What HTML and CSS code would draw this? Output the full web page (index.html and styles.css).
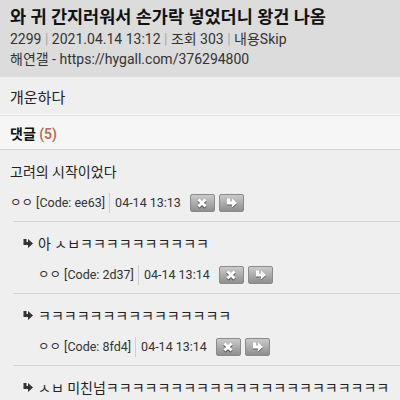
FILE: index.html
```html
<!DOCTYPE html>
<html lang="ko">
<head>
  <meta charset="UTF-8" />
  <meta name="viewport" content="width=device-width, initial-scale=1.0"/>
  <title>와 귀 간지러워서 손가락 넣었더니 왕건 나옴</title>
  <link rel="stylesheet" href="styles.css">
</head>
<body>

  <header class="post-head">
    <h1>와 귀 간지러워서 손가락 넣었더니 왕건 나옴</h1>
    <p class="meta">2299 <span class="bar">|</span> 2021.04.14 13:12 <span class="bar">|</span> 조회 303 <span class="bar">|</span> 내용Skip</p>
    <p class="meta">해연갤 - https://hygall.com/376294800</p>
  </header>

  <div class="post-body">개운하다</div>

  <div class="cmt-head">댓글 <span class="count">(5)</span></div>

  <ul class="comments">
    <li>
      <div class="cmt-text">고려의 시작이었다</div>
      <div class="cmt-meta">
        <span class="who">ㅇㅇ [Code: ee63]</span>
        <span class="when">04-14 13:13</span>
        <button class="btn" title="삭제"><svg width="12" height="12" viewBox="0 0 12 12"><path d="M2.5 2.5 L9.5 9.5 M9.5 2.5 L2.5 9.5" stroke="#5a5a5a" stroke-width="3.4" transform="translate(0 1)"/><path d="M2.5 2.5 L9.5 9.5 M9.5 2.5 L2.5 9.5" stroke="#fff" stroke-width="2.8"/></svg></button>
        <button class="btn" title="답글"><svg width="13" height="12" viewBox="0 0 13 12"><path d="M2 1.5 V7.5 H7 V10.5 L12 6 L7 1.5 V4.5 H5 V1.5 Z" fill="#5a5a5a" transform="translate(0 1)"/><path d="M2 1.5 V7.5 H7 V10.5 L12 6 L7 1.5 V4.5 H5 V1.5 Z" fill="#fff"/></svg></button>
      </div>
    </li>
    <li class="reply">
      <div class="cmt-text"><svg class="re" width="10" height="9" viewBox="0 0 10 9"><path d="M0.5 0 V6 H5 V9 L10 4.5 L5 0 V3 H3.5 V0 Z" fill="#333"/></svg>아 ㅅㅂㅋㅋㅋㅋㅋㅋㅋㅋㅋㅋ</div>
      <div class="cmt-meta">
        <span class="who">ㅇㅇ [Code: 2d37]</span>
        <span class="when">04-14 13:14</span>
        <button class="btn" title="삭제"><svg width="12" height="12" viewBox="0 0 12 12"><path d="M2.5 2.5 L9.5 9.5 M9.5 2.5 L2.5 9.5" stroke="#5a5a5a" stroke-width="3.4" transform="translate(0 1)"/><path d="M2.5 2.5 L9.5 9.5 M9.5 2.5 L2.5 9.5" stroke="#fff" stroke-width="2.8"/></svg></button>
        <button class="btn" title="답글"><svg width="13" height="12" viewBox="0 0 13 12"><path d="M2 1.5 V7.5 H7 V10.5 L12 6 L7 1.5 V4.5 H5 V1.5 Z" fill="#5a5a5a" transform="translate(0 1)"/><path d="M2 1.5 V7.5 H7 V10.5 L12 6 L7 1.5 V4.5 H5 V1.5 Z" fill="#fff"/></svg></button>
      </div>
    </li>
    <li class="reply">
      <div class="cmt-text"><svg class="re" width="10" height="9" viewBox="0 0 10 9"><path d="M0.5 0 V6 H5 V9 L10 4.5 L5 0 V3 H3.5 V0 Z" fill="#333"/></svg>ㅋㅋㅋㅋㅋㅋㅋㅋㅋㅋㅋㅋㅋㅋㅋ</div>
      <div class="cmt-meta">
        <span class="who">ㅇㅇ [Code: 8fd4]</span>
        <span class="when">04-14 13:14</span>
        <button class="btn" title="삭제"><svg width="12" height="12" viewBox="0 0 12 12"><path d="M2.5 2.5 L9.5 9.5 M9.5 2.5 L2.5 9.5" stroke="#5a5a5a" stroke-width="3.4" transform="translate(0 1)"/><path d="M2.5 2.5 L9.5 9.5 M9.5 2.5 L2.5 9.5" stroke="#fff" stroke-width="2.8"/></svg></button>
        <button class="btn" title="답글"><svg width="13" height="12" viewBox="0 0 13 12"><path d="M2 1.5 V7.5 H7 V10.5 L12 6 L7 1.5 V4.5 H5 V1.5 Z" fill="#5a5a5a" transform="translate(0 1)"/><path d="M2 1.5 V7.5 H7 V10.5 L12 6 L7 1.5 V4.5 H5 V1.5 Z" fill="#fff"/></svg></button>
      </div>
    </li>
    <li class="reply">
      <div class="cmt-text"><svg class="re" width="10" height="9" viewBox="0 0 10 9"><path d="M0.5 0 V6 H5 V9 L10 4.5 L5 0 V3 H3.5 V0 Z" fill="#333"/></svg>ㅅㅂ 미친넘ㅋㅋㅋㅋㅋㅋㅋㅋㅋㅋㅋㅋㅋㅋㅋㅋㅋㅋㅋㅋㅋㅋ</div>
    </li>
  </ul>

</body>
</html>
```

FILE: styles.css
```css
* {
  box-sizing: border-box;
}

body {
  margin: 0;
  font-family: Roboto, "Noto Sans CJK KR", sans-serif;
  background-color: #efefef;
  color: #222;
  height: 400px;
  overflow: hidden;
}

.post-head {
  background-color: #dcdcdc;
  padding: 6px 10px 8px;
}

.post-head h1 {
  margin: 0 0 1px;
  font-size: 17.5px;
  line-height: 22px;
  font-weight: bold;
  color: #111;
}

.post-head .meta {
  margin: 0;
  font-size: 14px;
  line-height: 20px;
  color: #333;
}

.bar {
  color: #aaa;
}

.post-body {
  padding: 11px 10px 6px;
  font-size: 15px;
  line-height: 20px;
  border-bottom: 1px solid #fafafa;
}

.cmt-head {
  background-color: #f6f6f6;
  border-top: 1px solid #e0e0e0;
  border-bottom: 1px solid #d6d6d6;
  padding: 8px 10px 5px;
  font-size: 14px;
  line-height: 20px;
  font-weight: bold;
  color: #111;
}

.cmt-head .count {
  color: #b86a55;
  font-weight: 600;
}

.comments {
  list-style: none;
  margin: 0;
  padding: 0;
}

.comments li {
  padding: 12px 10px 9px;
  background: linear-gradient(#d6d6d6, #d6d6d6) 13px 100% / calc(100% - 13px) 1px no-repeat;
}

.comments li.reply {
  padding-left: 23px;
}

.cmt-text {
  font-size: 14px;
  line-height: 20px;
  white-space: nowrap;
}

.re {
  margin-right: 5px;
  vertical-align: 1px;
}

.cmt-meta {
  margin-top: 11px;
  display: flex;
  align-items: center;
  font-size: 12.5px;
  line-height: 20px;
  color: #333;
}

.reply .cmt-meta {
  padding-left: 15px;
}

.who {
  padding-right: 4px;
  border-right: 1px solid #cfcfcf;
}

.when {
  padding-left: 5px;
  margin-right: 9px;
}

.btn {
  width: 25px;
  height: 18px;
  margin-right: 4px;
  padding: 0;
  display: flex;
  align-items: center;
  justify-content: center;
  border: 1px solid #8a8a8a;
  border-radius: 2px;
  background: linear-gradient(#cbcbcb, #8e8e8e);
}
```
